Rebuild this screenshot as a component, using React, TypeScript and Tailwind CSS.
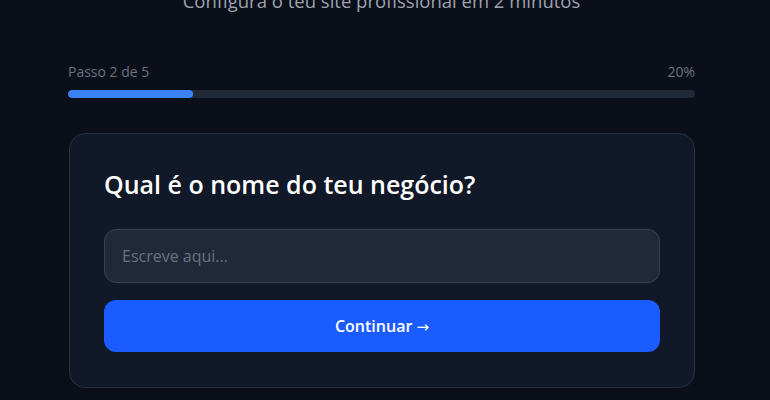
import { useState } from "react";

const STEP = 2;
const TOTAL_STEPS = 5;

export default function App() {
  const [name, setName] = useState("");
  const pct = Math.round((STEP / TOTAL_STEPS) * 100) / 2;

  return (
    <div
      className="min-h-screen overflow-hidden bg-[#0b0f19] text-white"
      style={{ fontFamily: '"Open Sans", "Noto Sans", sans-serif' }}
    >
      <div className="ml-[68px] w-[627px]">
        <p className="-mt-[13px] text-center text-[18.5px] leading-7 text-[#9ca3af]">
          Configura o teu site profissional em 2 minutos
        </p>

        <div className="mt-[47px]">
          <div className="flex items-center justify-between text-sm leading-5 text-[#6b7280]">
            <span>
              Passo {STEP} de {TOTAL_STEPS}
            </span>
            <span>{pct}%</span>
          </div>
          <div className="mt-[8px] h-2 w-full overflow-hidden rounded-full bg-[#1f2937]">
            <div className="h-full rounded-full bg-[#3b82f6]" style={{ width: `${pct}%` }} />
          </div>
        </div>

        <div className="ml-px mt-[35px] rounded-2xl border border-[#283040] bg-[#111827] px-[34px] pb-[35px] pt-[34px]">
          <h2 className="text-[25px] font-semibold leading-8 text-white">
            Qual é o nome do teu negócio?
          </h2>
          <input
            value={name}
            onChange={(e) => setName(e.target.value)}
            placeholder="Escreve aqui..."
            className="mt-[29px] h-[54px] w-full rounded-xl border border-[#374151] bg-[#1f2937] px-[17px] text-base text-white outline-none placeholder:text-[#6b7280]"
          />
          <button className="mt-[17px] h-[52px] w-full rounded-xl bg-[#1a5cff] text-base font-semibold text-white">
            Continuar <span className="font-['DejaVu_Sans'] text-[15px] font-normal">→</span>
          </button>
        </div>
      </div>
    </div>
  );
}
